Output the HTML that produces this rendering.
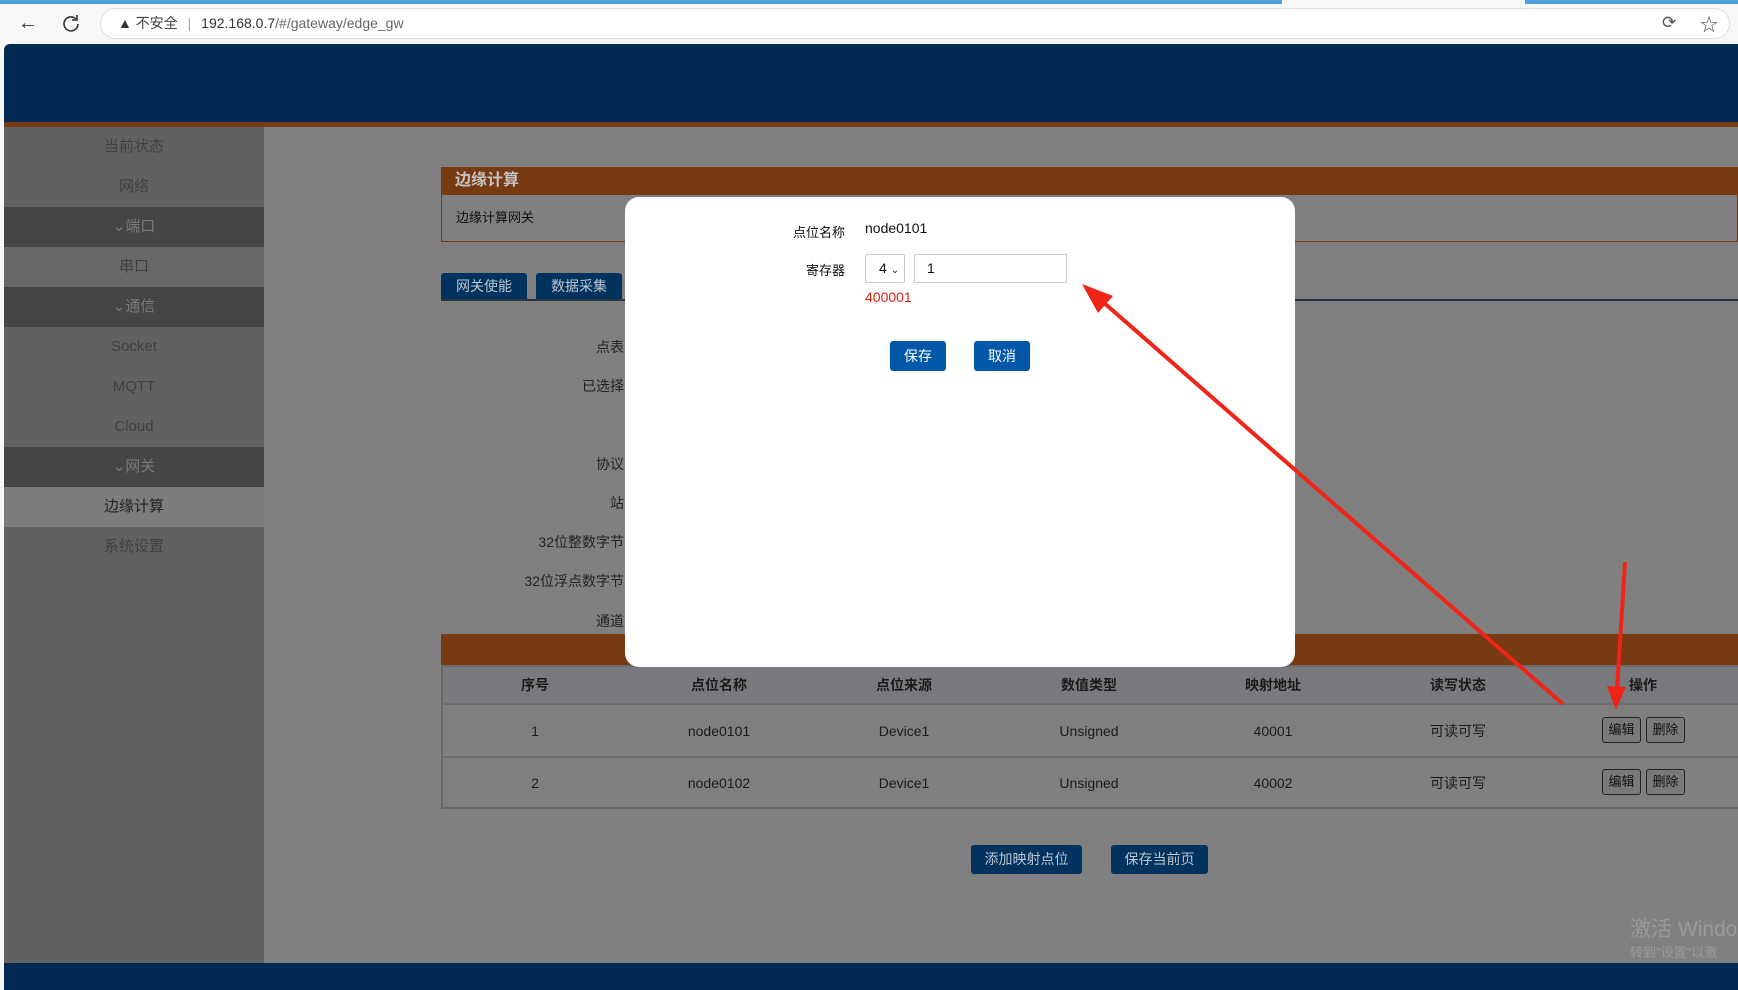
<!DOCTYPE html>
<html><head><meta charset="utf-8"><style>
*{margin:0;padding:0;box-sizing:border-box}
body{width:1738px;height:990px;overflow:hidden;position:relative;background:#f7f7f7;font-family:"Liberation Sans","Noto Sans CJK SC",sans-serif;font-size:14px;color:#111}
.a{position:absolute}
.side{position:absolute;left:4px;width:260px;height:40px;line-height:40px;text-align:center;color:#404040;font-size:15px}
.dk{background:#454545;color:#7a7a7a}
.lbl{position:absolute;right:1114px;color:#222;font-size:14px;text-align:right;white-space:nowrap}
.th{position:absolute;top:665px;height:40px;line-height:40px;font-weight:bold;color:#1a1a1a;transform:translateX(-50%);font-size:14px}
.td{position:absolute;transform:translateX(-50%);color:#1a1a1a;font-size:14px;line-height:18px}
.sb{position:absolute;width:39px;height:26px;border:1px solid #222;border-radius:3px;background:#7a7a7a;font-size:13px;text-align:center;line-height:24px;color:#111}
.nb{position:absolute;background:#00325e;color:#bcc6d0;border-radius:3px;text-align:center;font-size:14px}
</style></head><body>
<div class="a" style="left:0;top:0;width:1282px;height:4px;background:#4b9fe1"></div>
<div class="a" style="left:1525px;top:0;width:213px;height:4px;background:#4b9fe1"></div>
<div class="a" style="left:18px;top:12px;font-size:20px;color:#333">&#8592;</div>
<svg class="a" style="left:62px;top:14px" width="18" height="18" viewBox="0 0 18 18"><path d="M14 5A7 7 0 1 0 16 10" fill="none" stroke="#333" stroke-width="1.6"/><path d="M15 1v5h-5" fill="none" stroke="#333" stroke-width="1.6"/></svg>
<div class="a" style="left:100px;top:8px;width:1630px;height:31px;border:1px solid #ddd;border-radius:16px;background:#fff"></div>
<div class="a" style="left:118px;top:13px;font-size:14px;color:#333">&#9650; <span style="color:#444">不安全</span> <span style="color:#aaa;margin:0 6px">|</span> 192.168.0.7<span style="color:#666">/#/gateway/edge_gw</span></div>
<div class="a" style="left:1662px;top:13px;font-size:17px;color:#555">&#10227;</div>
<div class="a" style="left:1700px;top:11px;font-size:18px;color:#555">&#9734;</div>
<div class="a" style="left:4px;top:44px;width:1734px;height:946px;background:#808080;border-radius:6px 0 0 0;overflow:hidden"></div>
<div class="a" style="left:4px;top:44px;width:1734px;height:78px;background:#002a51;border-radius:6px 0 0 0"></div>
<div class="a" style="left:4px;top:122px;width:1734px;height:5px;background:#773a12"></div>
<div class="a" style="left:4px;top:127px;width:260px;height:836px;background:#616161"></div>
<div class="a" style="left:4px;top:963px;width:1734px;height:27px;background:#002a51"></div>
<div class="side" style="top:127px">当前状态</div>
<div class="side" style="top:167px">网络</div>
<div class="side dk" style="top:207px">&#8964;端口</div>
<div class="side" style="top:247px;background:#686868">串口</div>
<div class="side dk" style="top:287px">&#8964;通信</div>
<div class="side" style="top:327px">Socket</div>
<div class="side" style="top:367px">MQTT</div>
<div class="side" style="top:407px">Cloud</div>
<div class="side dk" style="top:447px">&#8964;网关</div>
<div class="side" style="top:487px;background:#7d7d7d;color:#222">边缘计算</div>
<div class="side" style="top:527px">系统设置</div>
<div class="a" style="left:441px;top:167px;width:1297px;height:28px;background:#773a12;color:#c4c4c4;font-weight:bold;font-size:16px;line-height:28px;padding-left:14px">边缘计算</div>
<div class="a" style="left:441px;top:195px;width:1297px;height:47px;border:1px solid #773a12;border-top:none;line-height:46px;padding-left:14px;font-size:13px">边缘计算网关</div>
<div class="nb" style="left:441px;top:273px;width:86px;height:27px;line-height:27px;border-radius:3px 3px 0 0">网关使能</div>
<div class="nb" style="left:536px;top:273px;width:86px;height:27px;line-height:27px;border-radius:3px 3px 0 0">数据采集</div>
<div class="a" style="left:441px;top:299px;width:1297px;height:2px;background:#2a3440"></div>
<div class="lbl" style="top:337px">点表</div>
<div class="lbl" style="top:376px">已选择</div>
<div class="lbl" style="top:454px">协议</div>
<div class="lbl" style="top:493px">站</div>
<div class="lbl" style="top:532px">32位整数字节</div>
<div class="lbl" style="top:571px">32位浮点数字节</div>
<div class="lbl" style="top:611px">通道</div>
<div class="a" style="left:441px;top:634px;width:1297px;height:31px;background:#773a12"></div>
<div class="a" style="left:441px;top:665px;width:1297px;height:144px;border:2px solid #6a6a6a;border-right:none;background:#808080"></div>
<div class="a" style="left:443px;top:667px;width:1295px;height:38px;background:#787a7d;border-bottom:2px solid #6e6e6e"></div>
<div class="a" style="left:443px;top:756px;width:1295px;height:2px;background:#6e6e6e"></div>
<div class="th" style="left:535px">序号</div><div class="th" style="left:719px">点位名称</div><div class="th" style="left:904px">点位来源</div><div class="th" style="left:1089px">数值类型</div><div class="th" style="left:1273px">映射地址</div><div class="th" style="left:1458px">读写状态</div><div class="th" style="left:1643px">操作</div>
<div class="td" style="left:535px;top:722px">1</div><div class="td" style="left:719px;top:722px">node0101</div><div class="td" style="left:904px;top:722px">Device1</div><div class="td" style="left:1089px;top:722px">Unsigned</div><div class="td" style="left:1273px;top:722px">40001</div><div class="td" style="left:1458px;top:722px">可读可写</div>
<div class="td" style="left:535px;top:774px">2</div><div class="td" style="left:719px;top:774px">node0102</div><div class="td" style="left:904px;top:774px">Device1</div><div class="td" style="left:1089px;top:774px">Unsigned</div><div class="td" style="left:1273px;top:774px">40002</div><div class="td" style="left:1458px;top:774px">可读可写</div>
<div class="sb" style="left:1602px;top:717px">编辑</div><div class="sb" style="left:1646px;top:717px">删除</div>
<div class="sb" style="left:1602px;top:769px">编辑</div><div class="sb" style="left:1646px;top:769px">删除</div>
<div class="nb" style="left:971px;top:845px;width:111px;height:29px;line-height:29px">添加映射点位</div>
<div class="nb" style="left:1111px;top:845px;width:97px;height:29px;line-height:29px">保存当前页</div>
<div class="a" style="left:1630px;top:913px;font-size:21px;color:#9a9a9a;white-space:nowrap">激活 Windo</div>
<div class="a" style="left:1630px;top:942px;font-size:13px;color:#9a9a9a;white-space:nowrap">转到"设置"以激</div>
<div class="a" style="left:625px;top:197px;width:670px;height:470px;background:#fff;border-radius:14px"></div>
<div class="a" style="left:770px;top:222px;width:75px;text-align:right;font-size:13px">点位名称</div>
<div class="a" style="left:865px;top:220px;font-size:14px">node0101</div>
<div class="a" style="left:770px;top:260px;width:75px;text-align:right;font-size:13px">寄存器</div>
<div class="a" style="left:865px;top:254px;width:40px;height:29px;border:1px solid #ccc;border-radius:2px;font-size:14px;line-height:27px;padding-left:13px">4 <span style="font-size:10px">&#8964;</span></div>
<div class="a" style="left:914px;top:254px;width:153px;height:29px;border:1px solid #ccc;font-size:14px;line-height:27px;padding-left:12px">1</div>
<div class="a" style="left:865px;top:289px;color:#e0201a;font-size:14px">400001</div>
<div class="a" style="left:890px;top:341px;width:56px;height:30px;background:#0158a8;color:#fff;border-radius:3px;text-align:center;line-height:30px;font-size:14px">保存</div>
<div class="a" style="left:974px;top:341px;width:56px;height:30px;background:#0158a8;color:#fff;border-radius:3px;text-align:center;line-height:30px;font-size:14px">取消</div>
<svg class="a" style="left:0;top:0" width="1738" height="990">
<line x1="1563" y1="704" x2="1095" y2="295" stroke="#f02418" stroke-width="4"/>
<polygon points="1082,284 1113,296 1098,313" fill="#f02418"/>
<line x1="1625" y1="562" x2="1617" y2="690" stroke="#f02418" stroke-width="4"/>
<polygon points="1616,710 1607,686 1626,687" fill="#f02418"/>
</svg>
</body></html>
